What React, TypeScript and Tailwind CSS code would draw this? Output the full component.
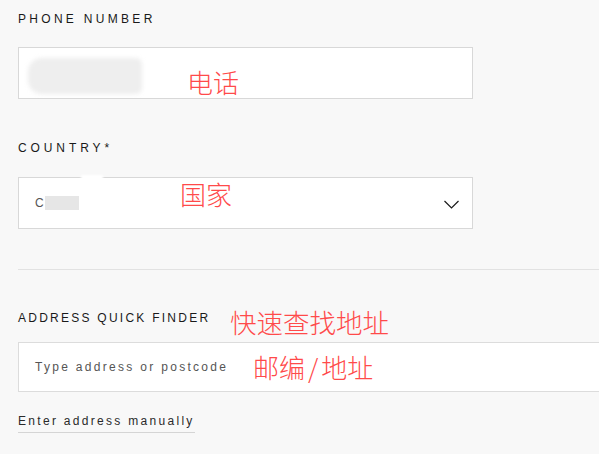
import React from "react"

const labelCls = "text-[12px] leading-[14px] text-[#1a1a1a] uppercase"
const noteCls =
  "absolute text-[#ff4a4a] leading-none font-light whitespace-nowrap"
const cjk = { fontFamily: '"Noto Sans CJK SC", sans-serif' }

export default function App() {
  return (
    <div
      className="w-full h-[454px] overflow-hidden bg-[#f8f8f8] pl-[18px] pt-[12px]"
      style={{ fontFamily: '"Liberation Sans", Arial, "Noto Sans CJK SC", sans-serif' }}
    >
      <div className={labelCls + " tracking-[3.3px]"}>Phone Number</div>
      <div className="relative mt-[21px] h-[52px] w-[455px] border border-[#d8d8d8] bg-white">
        <div className="absolute left-[9px] top-[10px] h-[36px] w-[114px] rounded-l-[14px] rounded-r-[6px] bg-[#eeeeee] blur-[2px]" />
        <span className={noteCls + " left-[168px] top-[21px] text-[26px]"} style={cjk}>
          电话
        </span>
      </div>

      <div className={labelCls + " mt-[42px] tracking-[3.9px]"}>Country*</div>
      <div className="relative mt-[22px] h-[52px] w-[455px] border border-[#d8d8d8] bg-white flex items-center">
        <div className="absolute left-[62px] -top-[3px] h-[6px] w-[22px] bg-white blur-[1px]" />
        <span className="pl-[16px] text-[12px] text-[#555]">C</span>
        <div className="ml-[1px] h-[14px] w-[34px] bg-[#e6e6e6]" />
        <span className={noteCls + " left-[161px] top-[3px] text-[26px]"} style={cjk}>
          国家
        </span>
        <svg
          className="absolute right-[13px] top-[22px]"
          width="15"
          height="9"
          viewBox="0 0 15 9"
          fill="none"
        >
          <polyline points="0.5,1 7.5,8 14.5,1" stroke="#1a1a1a" strokeWidth="1.2" />
        </svg>
      </div>

      <div className="mt-[40px] h-px w-full bg-[#e2e2e2]" />

      <div className="relative">
        <div className={labelCls + " mt-[41px] tracking-[2.25px]"}>Address Quick Finder</div>
        <span className={noteCls + " left-[212px] -top-[2px] text-[26.5px]"} style={cjk}>
          快速查找地址
        </span>
      </div>
      <div className="relative mt-[17px] h-[50px] w-[620px] border border-[#dcdcdc] bg-white flex items-center">
        <span className="pl-[16px] text-[12px] tracking-[2.3px] text-[#555]">
          Type address or postcode
        </span>
        <span className={noteCls + " left-[234px] top-[11px] text-[26px]"} style={cjk}>
          邮编<span className="px-[3px]">/</span>地址
        </span>
      </div>

      <div className="mt-[22px] inline-block border-b border-[#d5d5d5] pb-[4px] text-[12px] leading-[14px] tracking-[2.3px] text-[#2a2a2a]">
        Enter address manually
      </div>
    </div>
  )
}
